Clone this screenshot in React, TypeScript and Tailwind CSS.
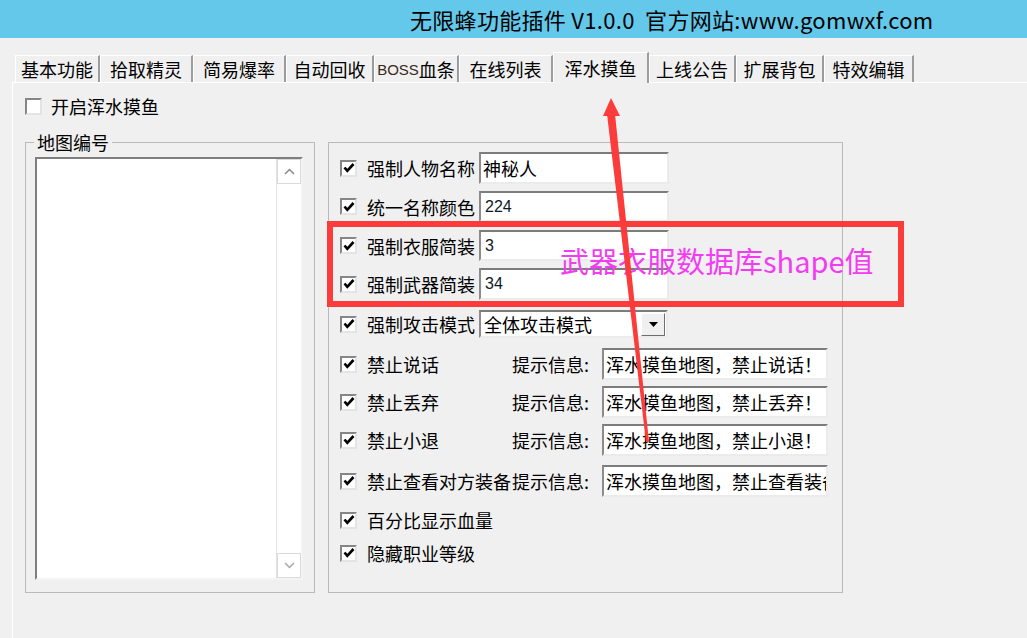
import React from "react";

function Check({ checked }: { checked?: boolean }) {
  return (
    <div className="w-[17px] h-[17px] shrink-0 bg-white border-2 border-t-[#868686] border-l-[#868686] border-r-[#e4e4e4] border-b-[#e4e4e4] flex items-center justify-center">
      {checked && (
        <svg width="12" height="12" viewBox="0 0 12 12">
          <polyline points="1.5,5.5 4.3,8.8 10.5,2" fill="none" stroke="#000" strokeWidth="2.7" />
        </svg>
      )}
    </div>
  );
}

function TextBox({ className, children, num }: { className: string; children: React.ReactNode; num?: boolean }) {
  return (
    <div
      className={
        "bg-white border-2 border-t-[#7c7c7c] border-l-[#8c8c8c] border-r-[#ebebeb] border-b-[#ebebeb] flex items-center pl-[2px] overflow-hidden whitespace-nowrap leading-none " +
        (num ? "font-['Liberation_Sans',sans-serif] text-[16px] text-[#101828] pl-[4px]" : "text-[18px]") +
        " " +
        className
      }
    >
      {children}
    </div>
  );
}

function HintRow({ label, text, mt }: { label: string; text: string; mt: string }) {
  return (
    <div className={"flex items-center h-[32px] " + mt}>
      <Check checked />
      <span className="ml-[10px] w-[145px] text-[18px] leading-none whitespace-nowrap">{label}</span>
      <span className="w-[90px] text-[18px] leading-none whitespace-nowrap">提示信息:</span>
      <TextBox className="w-[226px] h-[32px]">{text}</TextBox>
    </div>
  );
}

export default function App() {
  return (
    <div className="w-[1027px] h-[638px] bg-[#f0f0f0] relative overflow-hidden text-black font-['Noto_Sans_CJK_SC',sans-serif]">
      {/* title bar */}
      <div className="h-[38px] bg-[#64c8ea] flex items-center pl-[410px] text-[22px] leading-none whitespace-nowrap tracking-[0.3px]">
        <span>无限蜂功能插件 V1.0.0&nbsp;&nbsp;官方网站:www.gomwxf.com</span>
      </div>

      {/* tabs */}
      <div className="flex items-end h-[30px] mt-[14px] pl-[15px] text-[18px] leading-none">
        <div className="w-[85px] h-[27px] border-t border-l border-r-2 border-t-white border-l-white border-r-[#9c9c9c] flex items-center justify-center">基本功能</div>
        <div className="w-[93px] h-[27px] border-t border-l border-r-2 border-t-white border-l-white border-r-[#9c9c9c] flex items-center justify-center">拾取精灵</div>
        <div className="w-[93px] h-[27px] border-t border-l border-r-2 border-t-white border-l-white border-r-[#9c9c9c] flex items-center justify-center">简易爆率</div>
        <div className="w-[88px] h-[27px] border-t border-l border-r-2 border-t-white border-l-white border-r-[#9c9c9c] flex items-center justify-center">自动回收</div>
        <div className="w-[85px] h-[27px] border-t border-l border-r-2 border-t-white border-l-white border-r-[#9c9c9c] flex items-center justify-center">
          <span className="font-['Liberation_Sans',sans-serif] text-[15px] text-[#3a2a20]">BOSS</span>血条
        </div>
        <div className="w-[94px] h-[27px] border-t border-l border-r-2 border-t-white border-l-white border-r-[#9c9c9c] flex items-center justify-center">在线列表</div>
        <div className="relative z-10 -mb-[1px] w-[96px] h-[31px] bg-[#f0f0f0] border-t border-l border-r-2 border-t-white border-l-white border-r-[#9c9c9c] flex items-center justify-center">浑水摸鱼</div>
        <div className="w-[87px] h-[27px] border-t border-l border-r-2 border-t-white border-l-white border-r-[#9c9c9c] flex items-center justify-center">上线公告</div>
        <div className="w-[88px] h-[27px] border-t border-l border-r-2 border-t-white border-l-white border-r-[#9c9c9c] flex items-center justify-center">扩展背包</div>
        <div className="w-[90px] h-[27px] border-t border-l border-r-2 border-t-white border-l-white border-r-[#9c9c9c] flex items-center justify-center">特效编辑</div>
      </div>

      {/* tab page */}
      <div className="ml-[12px] h-[556px] border-t border-l border-t-white border-l-white pt-[14px] pl-[12px]">
        <div className="flex items-center h-[18px]">
          <Check />
          <span className="ml-[9px] text-[18px] leading-none">开启浑水摸鱼</span>
        </div>

        <div className="flex gap-[13px] mt-[27px]">
          {/* left group */}
          <div className="w-[290px] h-[451px] border border-[#bababa]">
            <div className="-mt-[12px] ml-[8px] px-[3px] w-fit h-[22px] bg-[#f0f0f0] text-[18px] leading-[22px]">地图编号</div>
            <div className="ml-[9px] mt-[4px] w-[268px] h-[423px] bg-white border-2 border-t-[#7e7e7e] border-l-[#7e7e7e] border-r-[#f4f4f4] border-b-[#f4f4f4] flex justify-end">
              <div className="w-[25px] h-full border-l border-l-[#e2e2e2] flex flex-col justify-between">
                <div className="h-[25px] border border-[#dadada] flex items-center justify-center">
                  <svg width="11" height="7" viewBox="0 0 11 7">
                    <polyline points="1,6 5.5,1.5 10,6" fill="none" stroke="#8a8a8a" strokeWidth="1.5" />
                  </svg>
                </div>
                <div className="h-[25px] border border-[#dadada] flex items-center justify-center">
                  <svg width="11" height="7" viewBox="0 0 11 7">
                    <polyline points="1,1 5.5,5.5 10,1" fill="none" stroke="#a8a8a8" strokeWidth="1.5" />
                  </svg>
                </div>
              </div>
            </div>
          </div>

          {/* right group */}
          <div className="w-[515px] h-[451px] border border-[#bababa] pt-[9px] pl-[11px]">
            <div className="flex items-center h-[32px]">
              <Check checked />
              <span className="ml-[10px] w-[112px] text-[18px] leading-none whitespace-nowrap">强制人物名称</span>
              <TextBox className="w-[190px] h-[32px]">神秘人</TextBox>
            </div>
            <div className="flex items-center h-[31px] mt-[7px]">
              <Check checked />
              <span className="ml-[10px] w-[112px] text-[18px] leading-none whitespace-nowrap">统一名称颜色</span>
              <TextBox className="w-[190px] h-[31px]" num>224</TextBox>
            </div>
            <div className="flex items-center h-[31px] mt-[8px]">
              <Check checked />
              <span className="ml-[10px] w-[112px] text-[18px] leading-none whitespace-nowrap">强制衣服简装</span>
              <TextBox className="w-[190px] h-[31px]" num>3</TextBox>
            </div>
            <div className="flex items-center h-[32px] mt-[7px]">
              <Check checked />
              <span className="ml-[10px] w-[112px] text-[18px] leading-none whitespace-nowrap">强制武器简装</span>
              <TextBox className="w-[190px] h-[32px]" num>34</TextBox>
            </div>
            <div className="flex items-center h-[28px] mt-[10px]">
              <Check checked />
              <span className="ml-[10px] w-[112px] text-[18px] leading-none whitespace-nowrap">强制攻击模式</span>
              <div className="w-[189px] h-[28px] bg-white border-2 border-t-[#7c7c7c] border-l-[#8c8c8c] border-r-[#ebebeb] border-b-[#ebebeb] flex items-center justify-between pl-[3px] pr-[1px]">
                <span className="text-[18px] leading-none whitespace-nowrap">全体攻击模式</span>
                <div className="w-[24px] h-[23px] bg-[#f0f0f0] border border-t-white border-l-white border-r-[#6e6e6e] border-b-[#6e6e6e] flex items-center justify-center">
                  <svg width="9" height="5" viewBox="0 0 9 5">
                    <polygon points="0,0 9,0 4.5,5" fill="#000" />
                  </svg>
                </div>
              </div>
            </div>
            <HintRow label="禁止说话" text="浑水摸鱼地图，禁止说话！" mt="mt-[10px]" />
            <HintRow label="禁止丢弃" text="浑水摸鱼地图，禁止丢弃！" mt="mt-[6px]" />
            <HintRow label="禁止小退" text="浑水摸鱼地图，禁止小退！" mt="mt-[6px]" />
            <HintRow label="禁止查看对方装备" text="浑水摸鱼地图，禁止查看装备！" mt="mt-[9px]" />
            <div className="flex items-center h-[24px] mt-[11px]">
              <Check checked />
              <span className="ml-[10px] text-[18px] leading-none whitespace-nowrap">百分比显示血量</span>
            </div>
            <div className="flex items-center h-[24px] mt-[9px]">
              <Check checked />
              <span className="ml-[10px] text-[18px] leading-none whitespace-nowrap">隐藏职业等级</span>
            </div>
          </div>
        </div>
      </div>

      {/* annotation overlays */}
      <div className="absolute left-[327px] top-[221px] w-[577px] h-[86px] border-[6px] border-[#fc3b3b]" />
      <div className="absolute left-[560px] top-[246px] text-[29px] leading-none text-[#f23cf2] whitespace-nowrap">武器衣服数据库shape值</div>
      <svg className="absolute left-0 top-0 pointer-events-none" width="1027" height="638" viewBox="0 0 1027 638">
        <polygon points="607,114 615,114 649,442 646,442" fill="#fc3b3b" />
        <polygon points="611,98 603,116 620,116" fill="#fc3b3b" />
      </svg>
    </div>
  );
}
